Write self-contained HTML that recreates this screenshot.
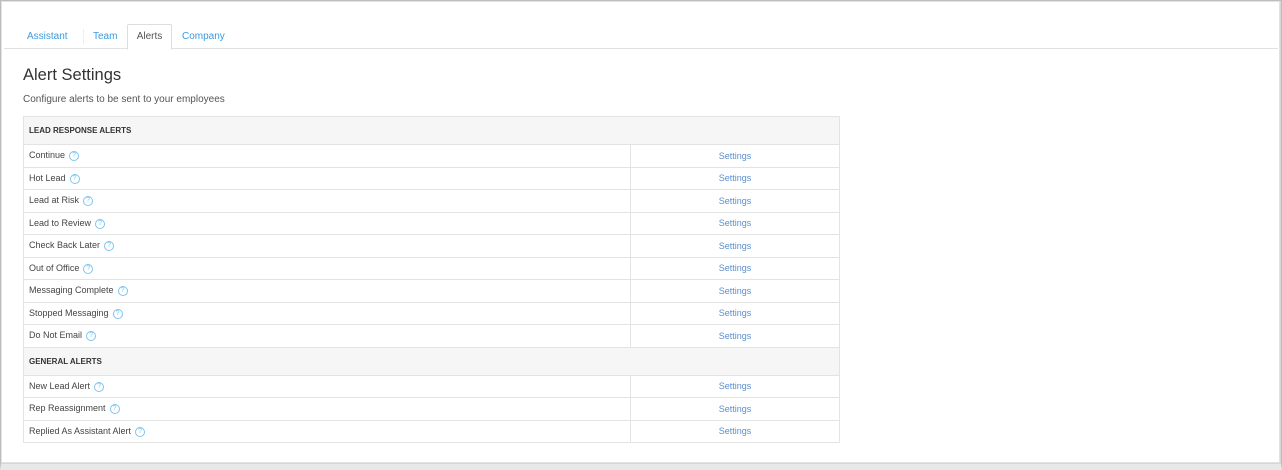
<!DOCTYPE html>
<html><head><style>
*{box-sizing:border-box;margin:0;padding:0}
body{width:1282px;height:470px;background:#d6d6d6;font-family:"Liberation Sans",sans-serif;position:relative;overflow:hidden}
.panel{position:absolute;left:1px;top:1px;width:1279px;height:462px;background:#fff;border:1px solid #e2e2e2}
.frame{position:absolute;left:0;top:0;width:1282px;height:470px;border:1px solid #bdbdbd;border-bottom:6px solid #e8e8e8;pointer-events:none}
.tabs{position:absolute;left:4px;top:24px;width:1274px;height:25px;border-bottom:1px solid #e0e0e0}
.tab{position:absolute;top:0;height:25px;font-size:10px;line-height:25px;color:#3a9be0}
.tab.act{border:1px solid #ddd;border-bottom:1px solid #fff;color:#555;background:#fff;height:26px;border-radius:2px 2px 0 0;line-height:23px}
.sep{position:absolute;left:79px;top:5px;height:15px;border-left:1px solid #eee}
h1{position:absolute;left:23px;top:66px;font-size:16.5px;font-weight:normal;color:#333}
.sub{position:absolute;left:23px;top:94px;font-size:10px;color:#555}
table{position:absolute;left:23px;top:116px;width:817px;border-collapse:collapse;font-size:9px;color:#444}
td{border:1px solid #e3e3e3;height:22.5px;padding:0 5px;vertical-align:middle}
tr.h td{background:#f6f6f6;height:28px;font-weight:bold;font-size:8px;color:#333}
td.s{width:209px;text-align:center;color:#5b8fcf}
.q{display:inline-block;width:10px;height:10px;border:1px solid #7cc6f0;border-radius:50%;color:#7cc6f0;font-size:7px;line-height:8px;text-align:center;margin-left:4px;vertical-align:middle}
</style></head><body>
<div class="panel"></div>
<div class="tabs">
<div class="tab" style="left:23px">Assistant</div>
<div class="sep"></div>
<div class="tab" style="left:89px">Team</div>
<div class="tab act" style="left:123px;width:45px;text-align:center">Alerts</div>
<div class="tab" style="left:178px">Company</div>
</div>
<h1>Alert Settings</h1>
<div class="sub">Configure alerts to be sent to your employees</div>
<table>
<tr class="h"><td colspan="2">LEAD RESPONSE ALERTS</td></tr>
<tr><td>Continue<span class="q">?</span></td><td class="s">Settings</td></tr>
<tr><td>Hot Lead<span class="q">?</span></td><td class="s">Settings</td></tr>
<tr><td>Lead at Risk<span class="q">?</span></td><td class="s">Settings</td></tr>
<tr><td>Lead to Review<span class="q">?</span></td><td class="s">Settings</td></tr>
<tr><td>Check Back Later<span class="q">?</span></td><td class="s">Settings</td></tr>
<tr><td>Out of Office<span class="q">?</span></td><td class="s">Settings</td></tr>
<tr><td>Messaging Complete<span class="q">?</span></td><td class="s">Settings</td></tr>
<tr><td>Stopped Messaging<span class="q">?</span></td><td class="s">Settings</td></tr>
<tr><td>Do Not Email<span class="q">?</span></td><td class="s">Settings</td></tr>
<tr class="h"><td colspan="2">GENERAL ALERTS</td></tr>
<tr><td>New Lead Alert<span class="q">?</span></td><td class="s">Settings</td></tr>
<tr><td>Rep Reassignment<span class="q">?</span></td><td class="s">Settings</td></tr>
<tr><td>Replied As Assistant Alert<span class="q">?</span></td><td class="s">Settings</td></tr>
</table>
<div class="frame"></div>
</body></html>
